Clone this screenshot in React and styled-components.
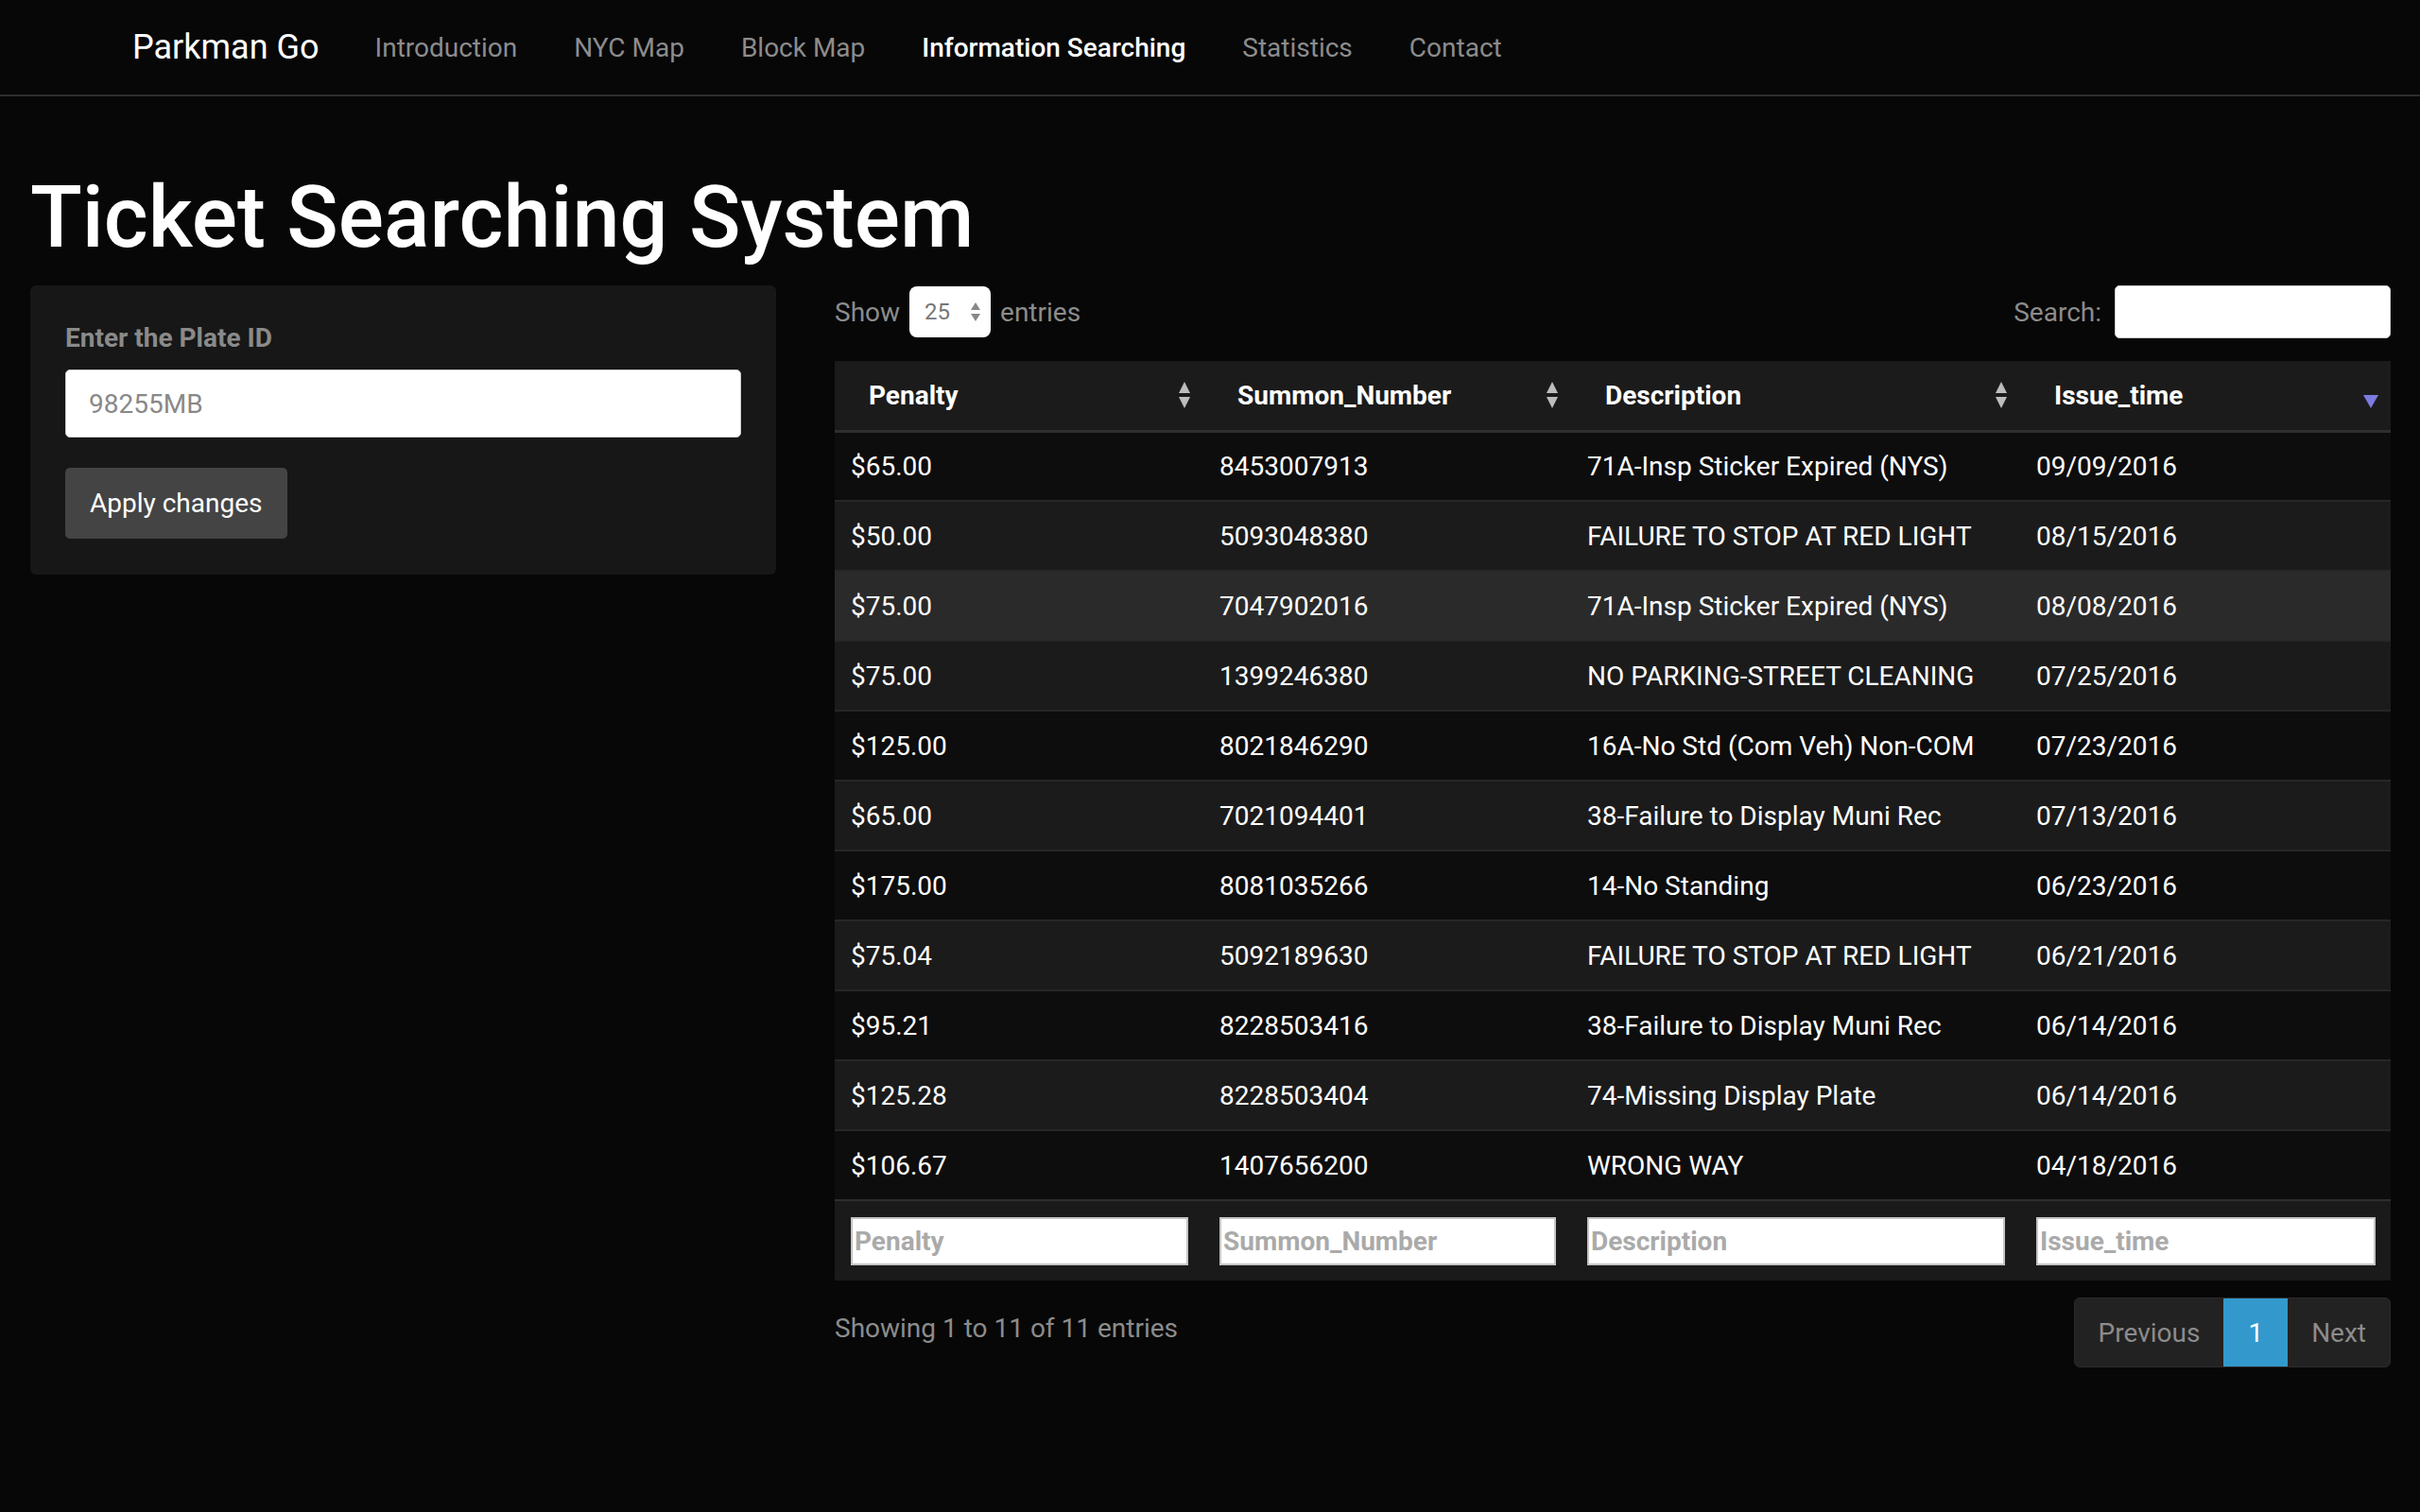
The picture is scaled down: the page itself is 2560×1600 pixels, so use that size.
import { memo } from "react";
import styled, { createGlobalStyle } from "styled-components";

const GlobalStyle = createGlobalStyle`
  html, body {
    margin: 0;
    padding: 0;
    background: #070707;
    font-family: Roboto, "Liberation Sans", sans-serif;
    color: #fff;
  }
  * { box-sizing: border-box; }
`;

const NavBar = styled.nav`
  height: 102px;
  display: flex;
  align-items: center;
  padding-left: 140px;
  border-bottom: 2px solid #2e2e2e;
  background: #070707;
`;

const Brand = styled.a`
  font-size: 36px;
  color: #fff;
  text-decoration: none;
  margin-right: 29px;
`;

const NavItem = styled.a`
  font-size: 28px;
  color: ${(p) => (p.$active ? "#fff" : "#8c8c8c")};
  font-weight: ${(p) => (p.$active ? 500 : 400)};
  text-decoration: none;
  padding: 0 30px;
`;

const Page = styled.main`
  padding: 0 31px 0 32px;
`;

const Title = styled.h1`
  margin: 78px 0 21px;
  font-size: 90px;
  line-height: 101px;
  font-weight: 500;
`;

const Layout = styled.div`
  display: grid;
  grid-template-columns: 789px 1fr;
  column-gap: 62px;
  align-items: start;
`;

const Well = styled.div`
  background: #171717;
  border-radius: 6px;
  padding: 38px 37px;
  display: flex;
  flex-direction: column;
  align-items: flex-start;
`;

const Label = styled.label`
  font-size: 28px;
  font-weight: 700;
  color: #8a8a8a;
  line-height: 36px;
  margin-bottom: 15px;
`;

const PlateInput = styled.input`
  width: 100%;
  height: 72px;
  border: 1px solid #ccc;
  border-radius: 5px;
  padding: 0 24px;
  font-family: inherit;
  font-size: 28px;
  color: #888;
  background: #fff;
  margin-bottom: 32px;
`;

const Button = styled.button`
  height: 75px;
  padding: 0 26px;
  background: #444;
  border: none;
  border-radius: 5px;
  color: #fff;
  font-family: inherit;
  font-size: 28px;
`;

const TableWrap = styled.section`
  display: flex;
  flex-direction: column;
`;

const Controls = styled.div`
  display: flex;
  justify-content: space-between;
  align-items: center;
  height: 56px;
  margin-bottom: 24px;
  font-size: 28px;
  color: #8c8c8c;
`;

const ControlGroup = styled.div`
  display: flex;
  align-items: center;
  gap: 10px;
`;

const SelectBox = styled.div`
  width: 86px;
  height: 54px;
  background: #fff;
  border-radius: 8px;
  display: flex;
  align-items: center;
  justify-content: space-between;
  padding: 0 10px 0 16px;
  color: #777;
  font-size: 24px;
`;

const SearchInput = styled.input`
  width: 292px;
  height: 56px;
  border: 1px solid #ccc;
  border-radius: 5px;
  background: #fff;
  margin-left: 4px;
`;

const Table = styled.table`
  width: 100%;
  border-collapse: collapse;
  table-layout: fixed;
  font-size: 28px;
`;

const Th = styled.th`
  position: relative;
  height: 74px;
  padding: 0 40px 0 36px;
  text-align: left;
  font-weight: 700;
  background: #1b1b1b;
  border-bottom: 3px solid #2e2e2e;
`;

const SortIcon = styled.span`
  position: absolute;
  right: 12px;
  top: 50%;
  transform: translateY(-50%);
  display: flex;
`;

const Tr = styled.tr`
  background: ${(p) => (p.$hover ? "#2a2a2a" : p.$odd ? "#0d0d0d" : "#1b1b1b")};
  border-top: 2px solid #262626;
`;

const Td = styled.td`
  height: 74px;
  padding: 0 17px;
  white-space: nowrap;
  overflow: hidden;
`;

const FootRow = styled.tr`
  background: #1a1a1a;
  border-top: 2px solid #2e2e2e;
`;

const FootCell = styled.td`
  height: 85px;
  padding: 0 16px 0 17px;
`;

const FilterInput = styled.input`
  width: 100%;
  height: 51px;
  border: 2px solid #c4c4c4;
  border-radius: 0;
  background: #fff;
  padding: 0 2px;
  font-family: inherit;
  font-size: 28px;
  font-weight: 700;
  &::placeholder { color: #aaa; }
`;

const Footer = styled.div`
  display: flex;
  justify-content: space-between;
  align-items: flex-start;
  margin-top: 18px;
`;

const Info = styled.div`
  font-size: 28px;
  color: #8c8c8c;
  margin-top: 16px;
`;

const Pager = styled.div`
  display: flex;
  height: 74px;
  background: #222;
  border: 1px solid #2a2a2a;
  border-radius: 6px;
  overflow: hidden;
`;

const PageBtn = styled.span`
  display: flex;
  align-items: center;
  padding: 0 ${(p) => (p.$current ? "26px" : "25px")};
  font-size: 28px;
  color: ${(p) => (p.$current ? "#fff" : "#8c8c8c")};
  background: ${(p) => (p.$current ? "#3399cc" : "transparent")};
`;

const BothArrows = () => (
  <svg width="16" height="30" viewBox="0 0 16 30">
    <path d="M8 1 L14 13 L2 13 Z" fill="#bdbdbd" />
    <path d="M8 29 L14 17 L2 17 Z" fill="#bdbdbd" />
  </svg>
);

const DescArrow = () => (
  <svg width="18" height="16" viewBox="0 0 18 16" style={{ marginTop: 14 }}>
    <path d="M1 1 L17 1 L9 15 Z" fill="#7b7be0" />
  </svg>
);

const SmallArrows = () => (
  <svg width="12" height="22" viewBox="0 0 12 22">
    <path d="M6 1 L11 9 L1 9 Z" fill="#888" />
    <path d="M6 21 L11 13 L1 13 Z" fill="#888" />
  </svg>
);

const columns = ["Penalty", "Summon_Number", "Description", "Issue_time"];

const rows = [
  ["$65.00", "8453007913", "71A-Insp Sticker Expired (NYS)", "09/09/2016"],
  ["$50.00", "5093048380", "FAILURE TO STOP AT RED LIGHT", "08/15/2016"],
  ["$75.00", "7047902016", "71A-Insp Sticker Expired (NYS)", "08/08/2016"],
  ["$75.00", "1399246380", "NO PARKING-STREET CLEANING", "07/25/2016"],
  ["$125.00", "8021846290", "16A-No Std (Com Veh) Non-COM", "07/23/2016"],
  ["$65.00", "7021094401", "38-Failure to Display Muni Rec", "07/13/2016"],
  ["$175.00", "8081035266", "14-No Standing", "06/23/2016"],
  ["$75.04", "5092189630", "FAILURE TO STOP AT RED LIGHT", "06/21/2016"],
  ["$95.21", "8228503416", "38-Failure to Display Muni Rec", "06/14/2016"],
  ["$125.28", "8228503404", "74-Missing Display Plate", "06/14/2016"],
  ["$106.67", "1407656200", "WRONG WAY", "04/18/2016"],
];

const navLinks = ["Introduction", "NYC Map", "Block Map", "Information Searching", "Statistics", "Contact"];

const App = () => {
  return (
    <>
      <GlobalStyle />
      <NavBar>
        <Brand href="#">Parkman Go</Brand>
        {navLinks.map((l) => (
          <NavItem key={l} href="#" $active={l === "Information Searching"}>
            {l}
          </NavItem>
        ))}
      </NavBar>
      <Page>
        <Title>Ticket Searching System</Title>
        <Layout>
          <Well>
            <Label>Enter the Plate ID</Label>
            <PlateInput defaultValue="98255MB" />
            <Button>Apply changes</Button>
          </Well>
          <TableWrap>
            <Controls>
              <ControlGroup>
                Show
                <SelectBox>
                  25
                  <SmallArrows />
                </SelectBox>
                entries
              </ControlGroup>
              <ControlGroup>
                Search:
                <SearchInput />
              </ControlGroup>
            </Controls>
            <Table>
              <colgroup>
                <col style={{ width: 390 }} />
                <col style={{ width: 389 }} />
                <col style={{ width: 475 }} />
                <col />
              </colgroup>
              <thead>
                <tr>
                  {columns.map((c) => (
                    <Th key={c}>
                      {c}
                      <SortIcon>{c === "Issue_time" ? <DescArrow /> : <BothArrows />}</SortIcon>
                    </Th>
                  ))}
                </tr>
              </thead>
              <tbody>
                {rows.map((r, i) => (
                  <Tr key={i} $odd={i % 2 === 0} $hover={i === 2}>
                    {r.map((v, j) => (
                      <Td key={j}>{v}</Td>
                    ))}
                  </Tr>
                ))}
              </tbody>
              <tfoot>
                <FootRow>
                  {columns.map((c) => (
                    <FootCell key={c}>
                      <FilterInput placeholder={c} />
                    </FootCell>
                  ))}
                </FootRow>
              </tfoot>
            </Table>
            <Footer>
              <Info>Showing 1 to 11 of 11 entries</Info>
              <Pager>
                <PageBtn>Previous</PageBtn>
                <PageBtn $current>1</PageBtn>
                <PageBtn>Next</PageBtn>
              </Pager>
            </Footer>
          </TableWrap>
        </Layout>
      </Page>
    </>
  );
};

export default memo(App);
